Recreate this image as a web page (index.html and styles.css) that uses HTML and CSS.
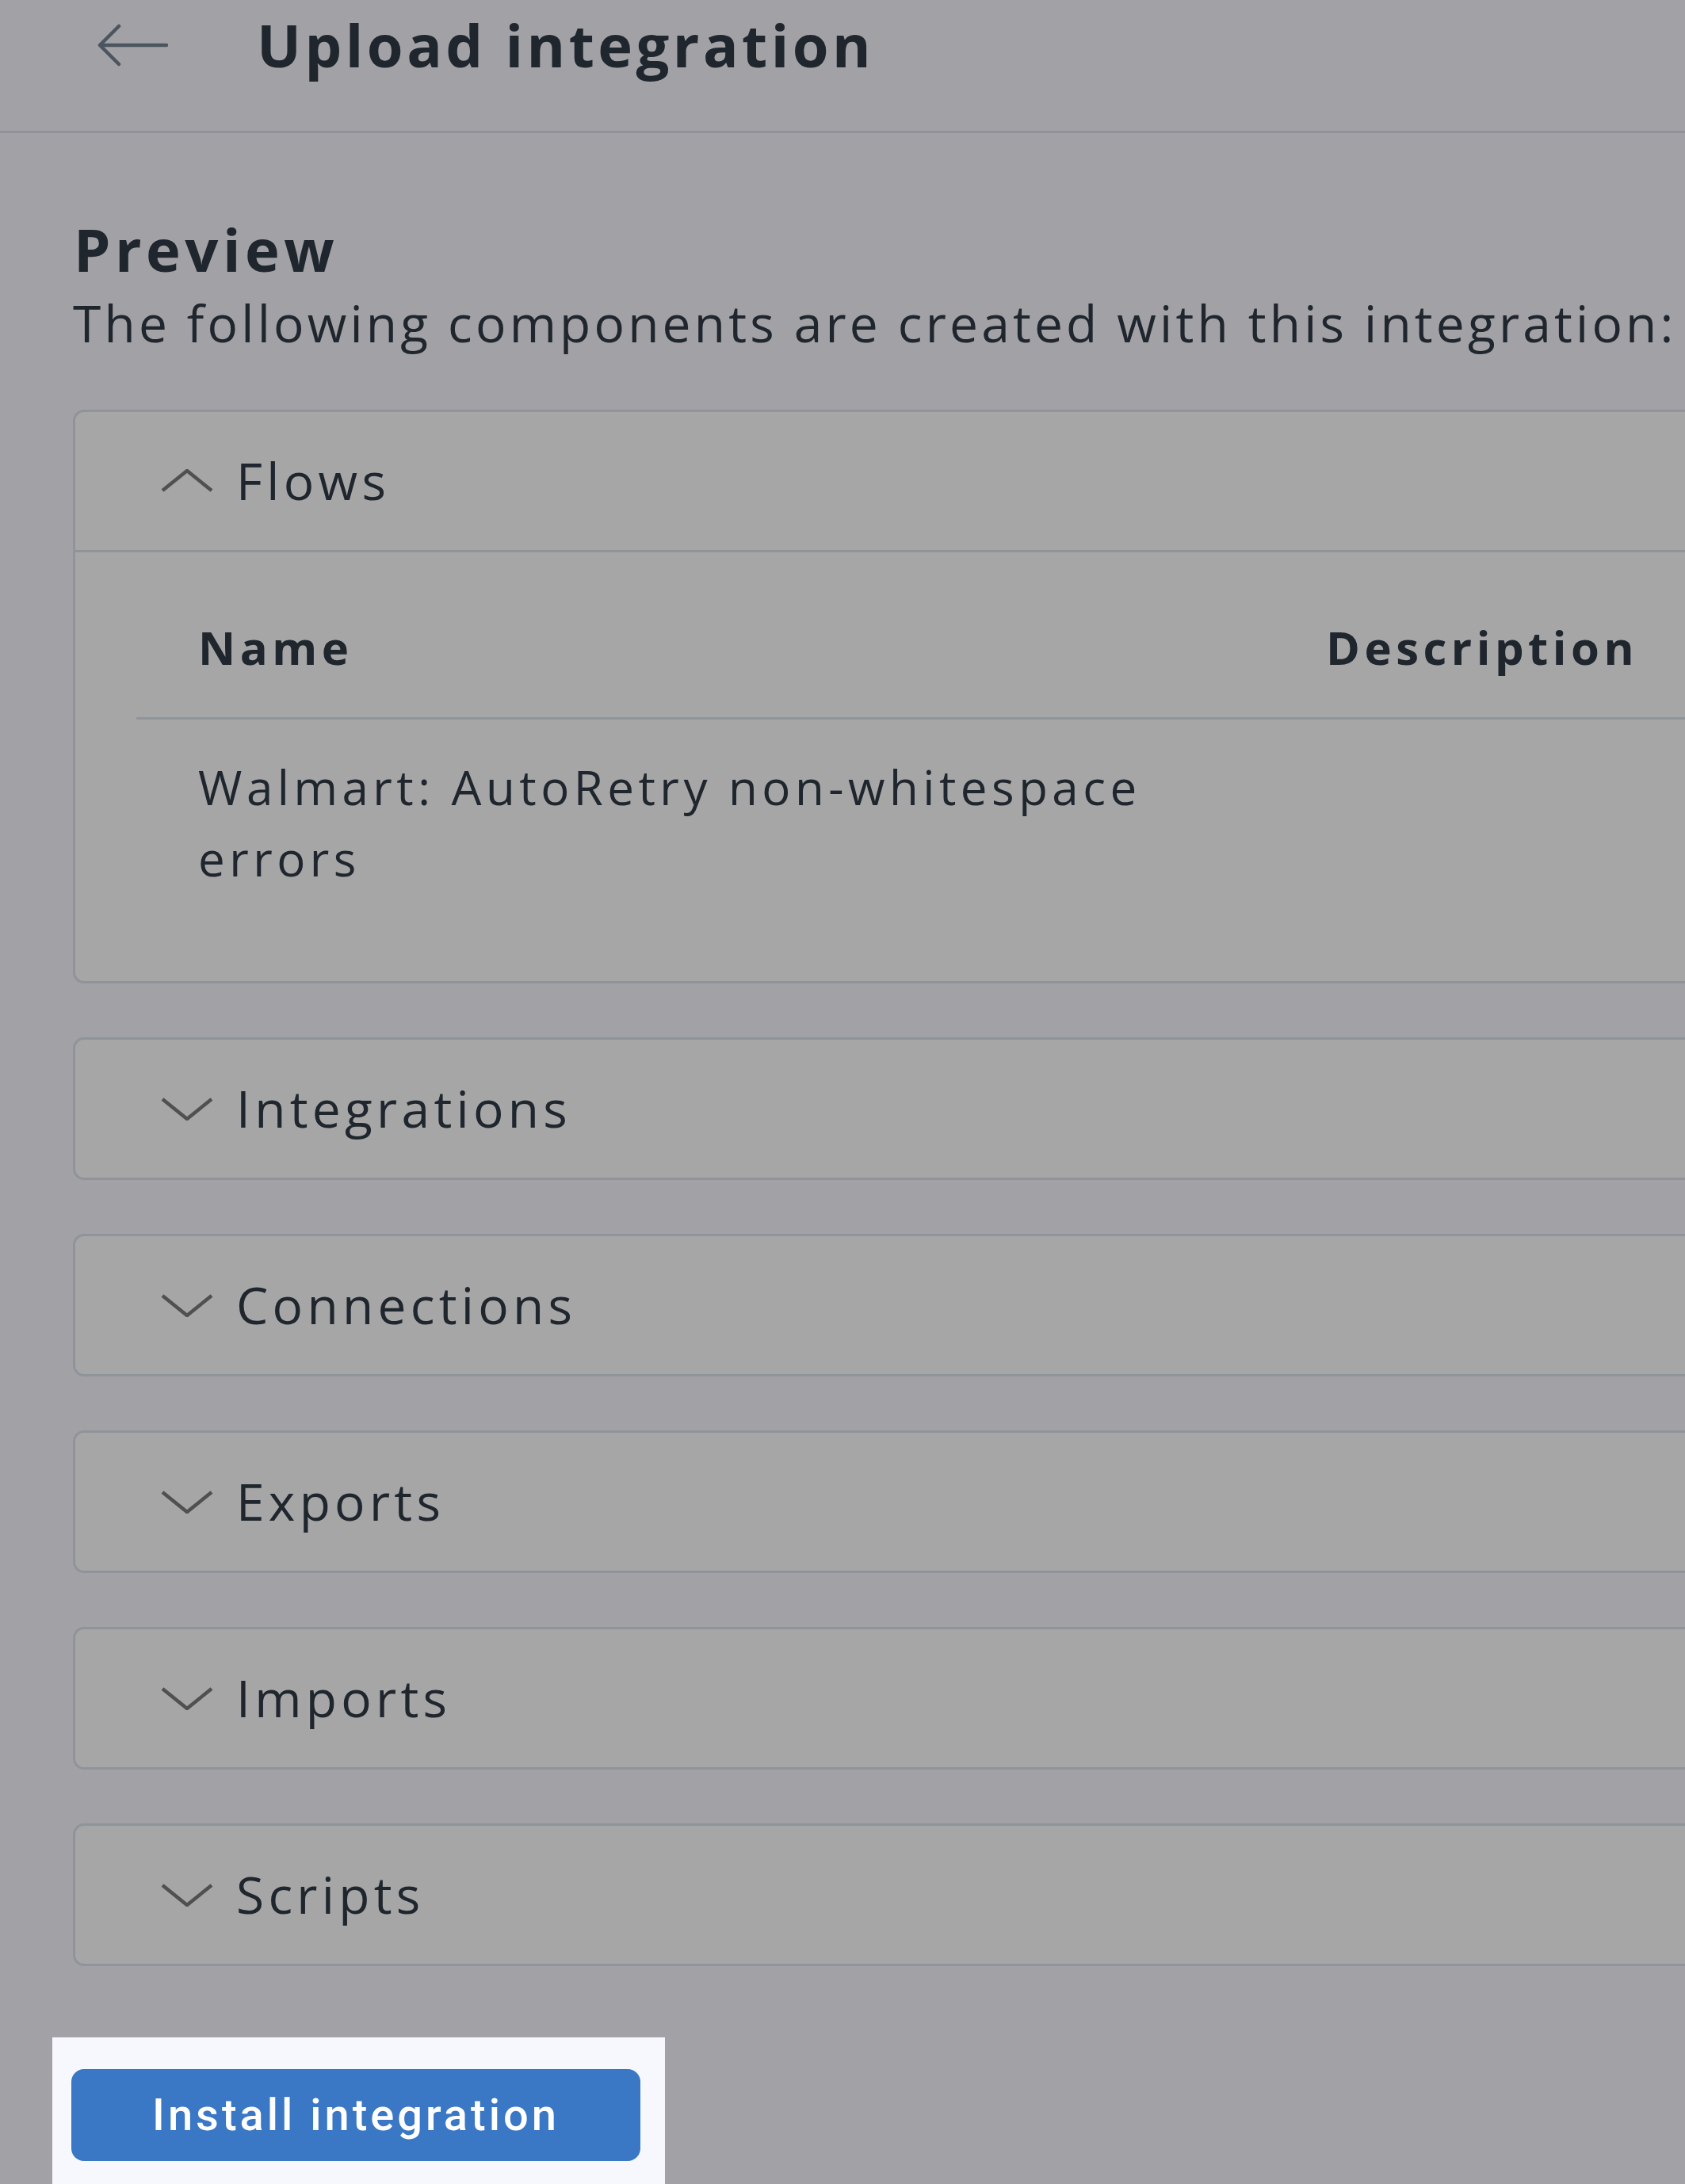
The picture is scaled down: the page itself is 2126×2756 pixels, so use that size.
FILE: index.html
```html
<!DOCTYPE html>
<html lang="en">
<head>
<meta charset="utf-8">
<title>Upload integration</title>
<link rel="stylesheet" href="styles.css">
</head>
<body>
<header class="topbar">
  <svg class="back" viewBox="0 0 90 54" width="90" height="54" aria-hidden="true">
    <path d="M88 27 H4 M28 3 L4 27 L28 51" fill="none" stroke="#4b5560" stroke-width="4.5" stroke-linecap="round" stroke-linejoin="round"/>
  </svg>
  <h1 class="title">Upload integration</h1>
</header>
<main class="content">
  <h2 class="section-title">Preview</h2>
  <p class="section-sub">The following components are created with this integration:</p>

  <section class="card">
    <div class="card-head open">
      <svg class="chev" viewBox="0 0 66 30" width="66" height="30" aria-hidden="true">
        <path d="M2 27 L33 2 L64 27" fill="none" stroke="#505050" stroke-width="4.5"/>
      </svg>
      <span class="card-label">Flows</span>
    </div>
    <div class="card-body">
      <div class="grid">
        <div class="th">Name</div>
        <div class="th">Description</div>
        <div class="td">Walmart: AutoRetry non-whitespace errors</div>
        <div class="td"></div>
      </div>
    </div>
  </section>

  <section class="card">
    <div class="card-head">
      <svg class="chev" viewBox="0 0 66 30" width="66" height="30" aria-hidden="true">
        <path d="M2 3 L33 28 L64 3" fill="none" stroke="#505050" stroke-width="4.5"/>
      </svg>
      <span class="card-label">Integrations</span>
    </div>
  </section>

  <section class="card">
    <div class="card-head">
      <svg class="chev" viewBox="0 0 66 30" width="66" height="30" aria-hidden="true">
        <path d="M2 3 L33 28 L64 3" fill="none" stroke="#505050" stroke-width="4.5"/>
      </svg>
      <span class="card-label">Connections</span>
    </div>
  </section>

  <section class="card">
    <div class="card-head">
      <svg class="chev" viewBox="0 0 66 30" width="66" height="30" aria-hidden="true">
        <path d="M2 3 L33 28 L64 3" fill="none" stroke="#505050" stroke-width="4.5"/>
      </svg>
      <span class="card-label">Exports</span>
    </div>
  </section>

  <section class="card">
    <div class="card-head">
      <svg class="chev" viewBox="0 0 66 30" width="66" height="30" aria-hidden="true">
        <path d="M2 3 L33 28 L64 3" fill="none" stroke="#505050" stroke-width="4.5"/>
      </svg>
      <span class="card-label">Imports</span>
    </div>
  </section>

  <section class="card">
    <div class="card-head">
      <svg class="chev" viewBox="0 0 66 30" width="66" height="30" aria-hidden="true">
        <path d="M2 3 L33 28 L64 3" fill="none" stroke="#505050" stroke-width="4.5"/>
      </svg>
      <span class="card-label">Scripts</span>
    </div>
  </section>

  <div class="spotlight">
    <button class="install" type="button">Install integration</button>
  </div>
</main>
</body>
</html>
```

FILE: styles.css
```css
html, body {
  margin: 0;
  padding: 0;
}
body {
  width: 2126px;
  height: 2756px;
  overflow: hidden;
  background: #a2a1a6;
  font-family: "Open Sans", "Noto Sans", sans-serif;
  color: #20262e;
}
.topbar {
  display: flex;
  align-items: center;
  height: 90px;
  padding: 12px 0 63px 122px;
  border-bottom: 3px solid #8f949b;
}
.back {
  display: block;
  flex: none;
}
.title {
  margin: 0 0 0 112px;
  font-size: 74px;
  line-height: 90px;
  font-weight: 700;
  letter-spacing: 4.5px;
}
.content {
  padding: 0 0 0 92px;
}
.section-title {
  margin: 102px 0 0 1px;
  font-size: 74px;
  line-height: 90px;
  font-weight: 700;
  letter-spacing: 5.5px;
}
.section-sub {
  margin: 0;
  font-size: 64px;
  line-height: 96px;
  font-weight: 400;
  letter-spacing: 4.2px;
  white-space: nowrap;
}
.card {
  width: 2300px;
  margin-top: 68px;
  background: #a6a6a6;
  border: 3px solid #8f949b;
  border-radius: 14px;
}
.section-sub + .card {
  margin-top: 61px;
}
.card-head {
  display: flex;
  align-items: center;
  height: 174px;
  padding-left: 108px;
}
.card-head.open {
  border-bottom: 3px solid #8f949b;
}
.chev {
  display: block;
  flex: none;
}
.card-label {
  margin-left: 29px;
  font-size: 64px;
  line-height: 80px;
  letter-spacing: 5.3px;
}
.card-body {
  padding: 32px 0 70px 77px;
}
.grid {
  display: grid;
  grid-template-columns: 1423px 1fr;
  width: 2200px;
}
.th {
  padding: 48px 78px;
  font-size: 58px;
  line-height: 80px;
  font-weight: 700;
  letter-spacing: 5.5px;
  border-bottom: 3px solid #8f949b;
}
.td {
  padding: 40px 78px;
  font-size: 60px;
  line-height: 90px;
  letter-spacing: 5.5px;
}
.spotlight {
  display: inline-block;
  margin: 90px 0 0 -26px;
  padding: 40px 31px 40px 24px;
  background: #f7f8fd;
}
.install {
  display: block;
  width: 718px;
  height: 116px;
  border: none;
  border-radius: 16px;
  background: #3a77c4;
  color: #ffffff;
  font-family: "Roboto", "Liberation Sans", sans-serif;
  font-size: 56px;
  font-weight: 500;
  letter-spacing: 4px;
}
```
